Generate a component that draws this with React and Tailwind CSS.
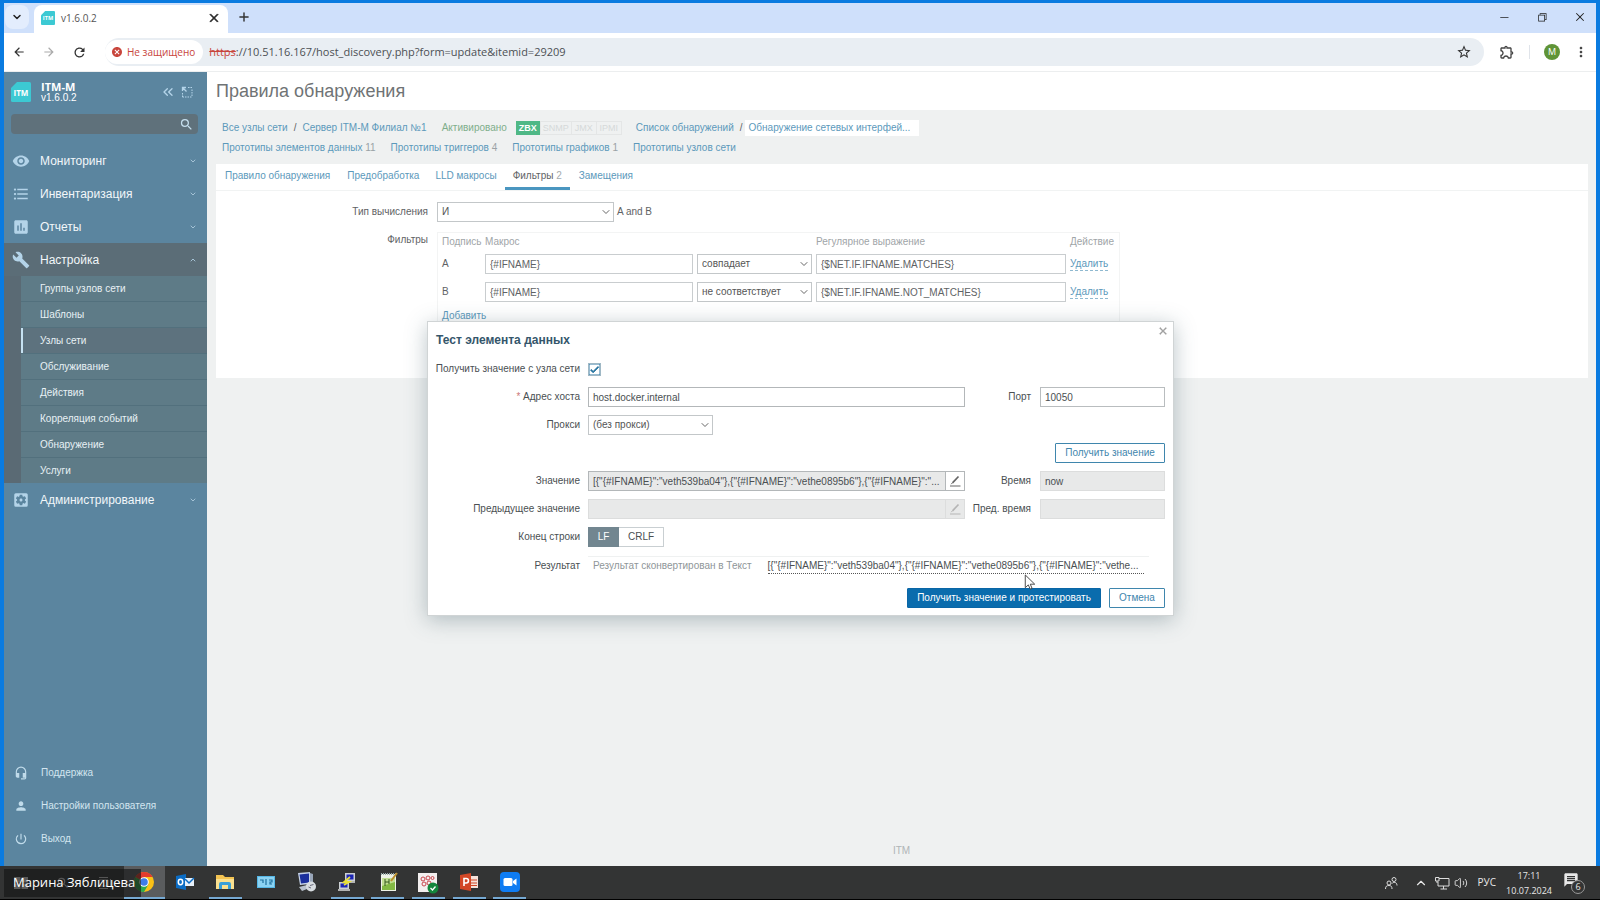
import React from "react";
import {
  MdArrowBack, MdArrowForward, MdRefresh, MdStarBorder, MdOutlineExtension, MdMoreVert,
  MdVisibility, MdFormatListBulleted, MdAssessment, MdBuild, MdSettingsApplications,
  MdHeadsetMic, MdPerson, MdPowerSettingsNew, MdSearch, MdCancel, MdCheck, MdMessage,
} from "react-icons/md";
import { VscChromeRestore, VscChromeClose, VscChromeMinimize } from "react-icons/vsc";
import { ChevronDown, ChevronUp, ChevronsLeft, Plus, Volume2 } from "lucide-react";

const VALUE = '[{"{#IFNAME}":"veth539ba04"},{"{#IFNAME}":"vethe0895b6"},{"{#IFNAME}":"...';
const RESULT = '[{"{#IFNAME}":"veth539ba04"},{"{#IFNAME}":"vethe0895b6"},{"{#IFNAME}":"vethe...';

function ItmLogo({ className }) {
  return (
    <svg viewBox="0 0 20 20" className={className} aria-hidden="true">
      <path d="M6 0H18.5A1.5 1.5 0 0 1 20 1.5V18.5A1.5 1.5 0 0 1 18.500 20H1.500A1.500 1.500 0 0 1 0 18.500V6Z" fill="#3cc9d3" />
      <text x="10" y="13.500" textAnchor="middle" fontSize="8" fontWeight="700" fontFamily="Open Sans, sans-serif" fill="#fff">ITM</text>
    </svg>
  );
}

function TabStrip() {
  return (
    <div className="flex h-[30px] shrink-0 items-end bg-[#cfe0fb]">
      <button aria-label="Поиск вкладок" className="mb-1 ml-px flex size-6 items-center justify-center rounded-lg bg-[#e3edfd]">
        <ChevronDown className="size-3 text-[#222]" strokeWidth={3} />
      </button>
      <div className="ml-[5px] flex h-7 w-[194px] items-center rounded-t-lg bg-white pr-2 pb-0.5 pl-[7px]">
        <ItmLogo className="size-[14px]" />
        <span className="ml-1.5 flex-1 text-[10px] text-[#555]">v1.6.0.2</span>
        <button aria-label="Закрыть вкладку" className="text-[#222]"><VscChromeClose className="size-3" strokeWidth={1} /></button>
      </div>
      <button aria-label="Новая вкладка" className="mb-[9px] ml-[9px]"><Plus className="size-3.5 text-[#333]" strokeWidth={2.5} /></button>
      <div className="mb-2.5 ml-auto flex items-center gap-[26px] pr-2.5 text-[#222]">
        <button aria-label="Свернуть"><VscChromeMinimize className="size-3" /></button>
        <button aria-label="Восстановить"><VscChromeRestore className="size-3" /></button>
        <button aria-label="Закрыть"><VscChromeClose className="size-3" /></button>
      </div>
    </div>
  );
}

function Toolbar() {
  return (
    <div className="flex h-[39px] shrink-0 items-center border-b border-[#eceeef] bg-white pl-2">
      <button aria-label="Назад"><MdArrowBack className="size-3.5 text-[#333]" /></button>
      <button aria-label="Вперёд" className="ml-4"><MdArrowForward className="size-3.5 text-[#aaa]" /></button>
      <button aria-label="Обновить" className="ml-4"><MdRefresh className="size-[15px] text-[#333]" /></button>
      <div className="ml-[18px] flex h-7 flex-1 items-center rounded-full bg-[#e9eef3] pr-3">
        <span className="flex h-6 items-center gap-1 rounded-full bg-white pr-2 pl-1.5 text-[10px] text-[#c8453c]">
          <MdCancel className="size-3" /> Не защищено
        </span>
        <span className="ml-1.5 flex-1 text-[11px] text-[#4c5054]">
          <span className="text-[#c8453c] line-through">https</span>://10.51.16.167/host_discovery.php?form=update&amp;itemid=29209
        </span>
        <button aria-label="Добавить в закладки"><MdStarBorder className="size-4 text-[#333]" /></button>
      </div>
      <div className="flex items-center pl-[15px]">
        <button aria-label="Расширения"><MdOutlineExtension className="size-4 text-[#444]" /></button>
        <span className="ml-[14px] h-3.5 w-px bg-[#e0e4ea]" />
        <button aria-label="Профиль" className="ml-[14px] flex size-4 items-center justify-center rounded-full bg-[#5f9437] text-[9px] text-white">M</button>
        <button aria-label="Меню" className="mr-[7px] ml-[13px]"><MdMoreVert className="size-4 text-[#444]" /></button>
      </div>
    </div>
  );
}

const SUB = ["Группы узлов сети", "Шаблоны", "Узлы сети", "Обслуживание", "Действия", "Корреляция событий", "Обнаружение", "Услуги"];

function NavItem({ icon: Icon, label, open }) {
  const Chev = open ? ChevronUp : ChevronDown;
  return (
    <a href="#" className={`flex h-[33px] items-center pr-2.5 pl-2 text-xs text-[#f2f7fa] ${open ? "bg-[#5b6d77]" : ""}`}>
      <Icon className="size-[18px] text-[#b4d4e9]" />
      <span className="ml-[10px] flex-1">{label}</span>
      <Chev className="size-2 text-[#a5c3d6]" strokeWidth={3} />
    </a>
  );
}

function Sidebar() {
  return (
    <aside className="flex w-[203px] shrink-0 flex-col bg-[#5b859f]">
      <div className="flex h-[42px] items-center pr-[14px] pb-0.5 pl-[7px]">
        <ItmLogo className="size-5" />
        <div className="ml-[10px] flex-1 text-white">
          <div className="font-['Open_Sans',sans-serif] text-[11px] leading-3 font-bold">ITM-M</div>
          <div className="text-[10px] leading-[10px]">v1.6.0.2</div>
        </div>
        <button aria-label="Свернуть меню"><ChevronsLeft className="size-4 text-[#b4d4e9]" /></button>
        <button aria-label="Скрыть меню" className="ml-[5px]">
          <svg viewBox="0 0 12 12" className="size-3" fill="none" stroke="#b4d4e9">
            <path d="M7 1.500H11M11 3.500V11M1.500 7V11M1.500 11H11" strokeDasharray="1.500 1" />
            <path d="M1.500 5V1.500H5M1.500 1.500L5.500 5.500" strokeWidth="1.300" />
          </svg>
        </button>
      </div>
      <div className="mr-[9px] ml-[7px] flex h-5 items-center rounded-sm bg-[#5f717b] pr-1">
        <input aria-label="Поиск" className="min-w-0 flex-1 bg-transparent px-1 text-[10px] text-white outline-none" />
        <button aria-label="Искать"><MdSearch className="size-[15px] text-[#c5dfee]" /></button>
      </div>
      <nav className="mt-[10px]">
        <NavItem icon={MdVisibility} label="Мониторинг" />
        <NavItem icon={MdFormatListBulleted} label="Инвентаризация" />
        <NavItem icon={MdAssessment} label="Отчеты" />
        <NavItem icon={MdBuild} label="Настройка" open />
        <ul className="border-l-[17px] border-[#5a6a74] bg-[#5e7b87]">
          {SUB.map((s) => (
            <li key={s} className="border-b border-[#52707d] last:border-b-0">
              <a href="#" className={`flex h-[25px] items-center border-l-2 pl-[17px] text-[10px] text-[#e8f1f5] ${s === "Узлы сети" ? "border-[#c6e2f2] bg-[#5d727e]" : "border-transparent"}`}>{s}</a>
            </li>
          ))}
        </ul>
        <NavItem icon={MdSettingsApplications} label="Администрирование" />
      </nav>
      <div className="mt-auto pb-[11px] text-[10px] text-[#d3e5ef]">
        {[[MdHeadsetMic, "Поддержка"], [MdPerson, "Настройки пользователя"], [MdPowerSettingsNew, "Выход"]].map(([Icon, t]) => (
          <a key={t} href="#" className="flex h-[33px] items-center pl-[10px]">
            <Icon className="size-3.5 text-[#c0dbea]" />
            <span className="ml-[13px]">{t}</span>
          </a>
        ))}
      </div>
    </aside>
  );
}

function Select({ id, label, options, className }) {
  return (
    <span className={`relative block ${className}`}>
      <select id={id} aria-label={label} className="h-5 w-full appearance-none border border-[#c3c7c9] bg-white pl-1 text-[10px] text-[#555]">
        {options.map((o) => <option key={o}>{o}</option>)}
      </select>
      <ChevronDown className="pointer-events-none absolute top-1 right-0.5 size-3 text-[#666]" />
    </span>
  );
}

const link = "text-[#5c99bb]";

function Page() {
  return (
    <div className="flex min-w-0 flex-1 flex-col bg-[#eff1f1] text-[10px] leading-4 text-[#5f6365]">
      <header className="flex h-[38px] items-center bg-white pl-[9px]"><h1 className="text-lg text-[#6f7375]">Правила обнаружения</h1></header>
      <div className="flex items-center pt-[10px] pl-[15px]">
        <a href="#" className={link}>Все узлы сети</a>
        <span className="mx-1.5">/</span>
        <a href="#" className={link}>Сервер ITM-M Филиал №1</a>
        <span className="ml-[15px] text-[#7fae8b]">Активировано</span>
        <span className="ml-[9px] flex h-[14px] items-center text-[9px] text-[#d5d9d9]">
          <span className="flex h-full w-6 items-center justify-center bg-[#4fb886] font-bold text-white">ZBX</span>
          <span className="flex h-full w-8 items-center justify-center border border-[#e4e6e6]">SNMP</span>
          <span className="flex h-full w-6 items-center justify-center border-y border-[#e4e6e6]">JMX</span>
          <span className="flex h-full w-[26px] items-center justify-center border border-[#e4e6e6]">IPMI</span>
        </span>
        <a href="#" className={`ml-[14px] ${link}`}>Список обнаружений</a>
        <span className="ml-1.5">/</span>
        <a href="#" className={`ml-0.5 bg-white pr-[9px] pl-1 ${link}`}>Обнаружение сетевых интерфей...</a>
      </div>
      <div className="mt-1 flex gap-[15px] pl-[15px] text-[#9aa2a6]">
        <span><a href="#" className={link}>Прототипы элементов данных</a> 11</span>
        <span><a href="#" className={link}>Прототипы триггеров</a> 4</span>
        <span><a href="#" className={link}>Прототипы графиков</a> 1</span>
        <a href="#" className={link}>Прототипы узлов сети</a>
      </div>
      <section className="mt-2 mr-2 ml-[9px] h-[214px] bg-white">
        <div className="flex h-[27px] border-b border-[#f1f3f3]">
          <a href="#" className={`px-[9px] pt-1 ${link}`}>Правило обнаружения</a>
          <a href="#" className={`px-2 pt-1 ${link}`}>Предобработка</a>
          <a href="#" className={`px-2 pt-1 ${link}`}>LLD макросы</a>
          <a href="#" className="border-b-3 border-[#4a96c0] px-2 pt-1">Фильтры <span className="text-[#a5abae]">2</span></a>
          <a href="#" className={`px-[9px] pt-1 ${link}`}>Замещения</a>
        </div>
        <div className="mt-[11px] flex items-center">
          <label htmlFor="evaltype" className="w-[212px] text-right">Тип вычисления</label>
          <Select id="evaltype" options={["И", "ИЛИ"]} className="ml-[9px] w-[177px]" />
          <span className="ml-[3px]">A and B</span>
        </div>
        <div className="mt-[10px] flex">
          <span className="w-[212px] text-right">Фильтры</span>
          <div className="ml-[9px] border border-[#f3f4f4]">
            <table className="w-[681px] table-fixed text-left">
              <thead>
                <tr className="h-[17px] text-[#9fa5a8]">
                  <th className="w-[47px] pl-1 font-normal">Подпись</th>
                  <th className="w-[212px] font-normal">Макрос</th>
                  <th className="w-[119px]" />
                  <th className="w-[254px] font-normal">Регулярное выражение</th>
                  <th className="font-normal">Действие</th>
                </tr>
              </thead>
              <tbody>
                {[["A", "совпадает", "{$NET.IF.IFNAME.MATCHES}"], ["B", "не соответствует", "{$NET.IF.IFNAME.NOT_MATCHES}"]].map(([l, op, re]) => (
                  <tr key={l} className="h-7">
                    <td className="pl-1">{l}</td>
                    <td className="pr-1"><input aria-label={`Макрос ${l}`} defaultValue="{#IFNAME}" className="block h-5 w-full border border-[#c9cdcf] pl-1" /></td>
                    <td className="pr-1"><Select label={`Оператор ${l}`} options={[op]} className="w-full" /></td>
                    <td className="pr-1"><input aria-label={`Выражение ${l}`} defaultValue={re} className="block h-5 w-full border border-[#c9cdcf] pl-1" /></td>
                    <td><button className="border-b border-dashed border-[#8fb9d0] leading-3 text-[#5c99bb]">Удалить</button></td>
                  </tr>
                ))}
              </tbody>
            </table>
            <button className="mt-1 ml-1 border-b border-dashed border-[#8fb9d0] leading-3 text-[#5c99bb]">Добавить</button>
          </div>
        </div>
      </section>
      <footer className="mt-auto pb-[7px] text-center text-[#b0b5b7]">ITM</footer>
    </div>
  );
}

function Row({ id, label, required, children, side }) {
  return (
    <div className="flex h-5 items-center">
      <label htmlFor={id} className="mr-2 w-[146px] shrink-0 text-right whitespace-nowrap">{required && <span className="text-[#c77]">* </span>}{label}</label>
      {children}
      {side}
    </div>
  );
}

function Side({ id, label, ...rest }) {
  return (
    <>
      <label htmlFor={id} className="ml-auto pr-[9px]">{label}</label>
      <input id={id} {...rest} className="h-5 w-[125px] border border-[#b9bdbf] pl-1 read-only:border-[#dcdddd] read-only:bg-[#e8e9e9]" />
    </>
  );
}

function Pencil({ className }) {
  return (
    <svg viewBox="0 0 12 12" className={`size-3 ${className}`} fill="none" stroke="currentColor">
      <path d="M3.500 7.800L9.500 1.500" strokeWidth="1.700" /><path d="M2.200 9.200L3.500 7.800" /><path d="M1 11H11.500" />
    </svg>
  );
}

function TestDialog() {
  const btn = "h-5 rounded-[1px] border border-[#3f86ad] text-[#3f86ad]";
  return (
    <div role="dialog" aria-labelledby="dlg-title" className="absolute top-[249px] left-[423px] w-[747px] border border-[#d0d4d5] bg-white pr-2 pb-[7px] pl-1.5 text-[10px] leading-4 text-[#4a4f52] shadow-[0_4px_20px_rgba(60,90,100,0.35)]">
      <div className="flex h-[37px] justify-between">
        <h2 id="dlg-title" className="pt-[10px] pl-0.5 text-xs leading-4 font-bold text-[#35566b]">Тест элемента данных</h2>
        <button aria-label="Закрыть" className="-mr-1 mt-[3px] flex size-3 items-center justify-center self-start text-[#999]"><VscChromeClose className="size-2.5" strokeWidth={1} /></button>
      </div>
      <div className="flex flex-col gap-2">
        <Row id="get" label="Получить значение с узла сети">
          <span className="relative block size-[13px]">
            <input id="get" type="checkbox" defaultChecked className="block size-[13px] appearance-none border border-[#9fb8c5] bg-white" />
            <MdCheck className="pointer-events-none absolute top-px left-px size-[11px] text-[#1f6f9c]" strokeWidth={2} />
          </span>
        </Row>
        <Row id="host" label="Адрес хоста" required side={<Side id="port" label="Порт" defaultValue="10050" />}>
          <input id="host" defaultValue="host.docker.internal" className="h-5 w-[377px] border border-[#b3b7b9] pl-1" />
        </Row>
        <Row id="proxy" label="Прокси"><Select id="proxy" options={["(без прокси)"]} className="w-[125px]" /></Row>
        <div className="flex justify-end"><button className={`${btn} w-[110px]`}>Получить значение</button></div>
        <Row id="val" label="Значение" side={<Side id="time" label="Время" defaultValue="now" readOnly />}>
          <input id="val" readOnly value={VALUE} className="h-5 w-[358px] border border-[#b3b7b9] bg-[#e8e9e9] pl-1" />
          <button aria-label="Изменить значение" className="flex h-5 w-[19px] items-center justify-center border border-l-0 border-[#b3b7b9]"><Pencil className="text-[#666]" /></button>
        </Row>
        <Row id="prev" label="Предыдущее значение" side={<Side id="ptime" label="Пред. время" defaultValue="" readOnly />}>
          <input id="prev" readOnly className="h-5 w-[358px] border border-[#dcdddd] bg-[#e8e9e9]" />
          <button disabled aria-label="Изменить предыдущее значение" className="flex h-5 w-[19px] items-center justify-center border border-l-0 border-[#dcdddd] bg-[#e8e9e9]"><Pencil className="text-[#b5b5b5]" /></button>
        </Row>
        <div className="flex h-5 items-center" role="group" aria-label="Конец строки">
          <span className="mr-2 w-[146px] text-right">Конец строки</span>
          <button className="h-5 w-[31px] border border-[#728690] bg-[#728690] text-white">LF</button>
          <button className="h-5 w-[45px] border border-l-0 border-[#c9cfd2]">CRLF</button>
        </div>
        <div className="flex h-[22px] items-center">
          <span className="mr-2 w-[146px] text-right">Результат</span>
          <div className="mr-4 flex flex-1 items-center border-t border-[#eff1f1] pt-px pb-0.5 pl-[5px]">
            <span className="mr-4 shrink-0 text-[#8f9699]">Результат сконвертирован в Текст</span>
            <a href="#" className="min-w-[376px] border-b border-dotted border-[#555] leading-[14px] whitespace-nowrap">{RESULT}</a>
          </div>
        </div>
      </div>
      <div className="mt-[11px] flex justify-end gap-2">
        <button className="h-5 w-[194px] rounded-[1px] border border-[#0a66a6] bg-[#0a6cad] text-white">Получить значение и протестировать</button>
        <button className={`${btn} w-14`}>Отмена</button>
      </div>
    </div>
  );
}

const ICONS = [
  <svg viewBox="0 0 20 20" className="size-5"><circle cx="10" cy="10" r="10" fill="#fbc116" /><path d="M10 10L1.340 5A10 10 0 0 1 18.660 5H10Z" fill="#e33b2e" /><path d="M1.340 5A10 10 0 0 0 10 20L14.300 12.500L10 10L5.700 12.500Z" fill="#2da94f" /><path d="M1.340 5L5.700 12.500L10 10Z" fill="#2da94f" /><circle cx="10" cy="10" r="4.800" fill="#fff" /><circle cx="10" cy="10" r="3.800" fill="#3f7de8" /></svg>,
  <svg viewBox="0 0 20 20" className="size-5"><path d="M1 4L11 2V18L1 16Z" fill="#0b6cc4" /><rect x="10" y="6" width="9" height="8" fill="#e8f1fa" /><path d="M10 7L14 11L19 6" stroke="#0b6cc4" fill="none" strokeWidth="1.500" /><ellipse cx="5.500" cy="10" rx="2.200" ry="2.700" fill="none" stroke="#fff" strokeWidth="1.500" /></svg>,
  <svg viewBox="0 0 20 20" className="size-5"><path d="M1 3H8L10 5H19V17H1Z" fill="#f3c352" /><path d="M1 7H19V17H1Z" fill="#fbe08f" /><path d="M4 17V12Q4 10 6 10H14Q16 10 16 12V17H13V13H7V17Z" fill="#3a9fd8" /></svg>,
  <svg viewBox="0 0 20 20" className="size-5"><rect x="1" y="4" width="18" height="12" fill="#55b7e6" /><rect x="2" y="5" width="16" height="10" fill="#8bd2f2" /><path d="M4 8H7V11M10 7V13M13 8H16V10H14V12H16" stroke="#1e6f9c" fill="none" strokeWidth="1.200" /></svg>,
  <svg viewBox="0 0 20 20" className="size-5"><path d="M1 1L13 0V12L3 13Z" fill="#c7d3e8" /><path d="M2.500 2.500L12 1.500V10.500L4 11.500Z" fill="#1b2f9d" /><path d="M13 1L16 2V11L13 12Z" fill="#98a5b8" /><path d="M2 15L10 13V17L5 19Z" fill="#b9c2ce" /><circle cx="14" cy="14.500" r="5" fill="#d7dce0" /><path d="M11.500 15L14 16M13 13.500L16.500 12.500" stroke="#667" fill="none" /></svg>,
  <svg viewBox="0 0 20 20" className="size-5"><rect x="8" y="1" width="10" height="8" fill="#ccd0d4" /><rect x="9.500" y="2.500" width="7" height="5" fill="#1c25b5" /><rect x="2" y="10" width="10" height="7" fill="#ccd0d4" /><rect x="3.500" y="11.500" width="7" height="4" fill="#1c25b5" /><path d="M1 18H13M11 10H18" stroke="#ddd" strokeWidth="1.500" /><path d="M13 5L7 10H12L7 13" stroke="#e9e034" strokeWidth="1.800" fill="none" /></svg>,
  <svg viewBox="0 0 20 20" className="size-5"><rect x="3" y="2" width="15" height="17" fill="#eef2e8" /><path d="M4 6H17V18H4Z" fill="#83b944" /><path d="M4 6H17V10L4 14Z" fill="#c2df93" /><path d="M3 2H18" stroke="#9aa" strokeDasharray="1 1" strokeWidth="2" /><path d="M7 7V14M7 10H11M11 7V12" stroke="#345a1d" /><path d="M13 9L19 1" stroke="#b98d2d" strokeWidth="2" /></svg>,
  <svg viewBox="0 0 22 22" className="size-[22px]"><rect x="1" y="1" width="19" height="19" fill="#f3efef" /><g fill="none" stroke="#c9454c"><circle cx="6" cy="7" r="2" /><circle cx="11" cy="6" r="2" /><circle cx="15.500" cy="6" r="1.500" /><circle cx="7" cy="12" r="2" /><circle cx="12" cy="11" r="2" /></g><circle cx="16" cy="16" r="5.500" fill="#14863c" /><path d="M13.500 16L15.500 18L18.500 14.500" stroke="#fff" fill="none" strokeWidth="1.300" /></svg>,
  <svg viewBox="0 0 20 20" className="size-5"><rect x="9" y="4" width="10" height="12" fill="#f6e2da" /><path d="M12 8H18M12 11H18M12 13.500H18" stroke="#d24726" /><path d="M1 3L12 1V19L1 17Z" fill="#d24726" /><path d="M5 14V6.500H7.200A2.200 2.200 0 0 1 7.200 11H5" fill="none" stroke="#fff" strokeWidth="1.600" /></svg>,
  <svg viewBox="0 0 20 20" className="size-5"><rect width="20" height="20" rx="4" fill="#0f7cf2" /><rect x="3.500" y="6" width="9" height="8" rx="1.500" fill="#fff" /><path d="M13 9L16.500 6.500V13.500L13 11Z" fill="#fff" /></svg>,
];
const NAMES = ["Chrome", "Outlook", "Проводник", "Панель управления", "Удалённый рабочий стол", "PuTTY", "Notepad++", "База данных", "PowerPoint", "Zoom"];
const RUNNING = [0, 2, 5, 6, 7, 8, 9];

function Taskbar() {
  return (
    <div className="relative flex h-[34px] shrink-0 items-stretch border-b border-black bg-[#333434] font-['Open_Sans','Noto_Sans',sans-serif] text-[#e8e8e8]">
      <div className="flex w-[124px] items-center gap-7 pl-3.5 text-[#ccc]">
        <svg viewBox="0 0 14 14" className="size-3.5" fill="#ddd"><path d="M0 1H6.500V6.500H0ZM7.500 1H14V6.500H7.500ZM0 7.500H6.500V13H0ZM7.500 7.500H14V13H7.500Z" /></svg>
        <MdSearch className="size-3.5" />
        <svg viewBox="0 0 14 14" className="size-3.5" fill="none" stroke="#ccc"><path d="M1 4H10V10H1ZM12.500 3V11M1 1.500H10M1 12.500H10" /></svg>
      </div>
      <div className="flex w-[406px]">
        {ICONS.map((ic, i) => (
          <button key={i} aria-label={NAMES[i]} className={`flex flex-1 flex-col items-center justify-between pt-1.5 ${i === 0 ? "bg-[#5a5c5e]" : ""}`}>
            {ic}
            <span className={`h-0.5 ${i === 0 ? "w-full" : "w-[33px]"} ${RUNNING.includes(i) ? "bg-[#76a9d3]" : ""}`} />
          </button>
        ))}
      </div>
      <div className="absolute top-[3px] left-1 flex h-7 w-[137px] items-center bg-[#161616]/65 pl-[9px] text-[13px] whitespace-nowrap text-white">Марина Зяблицева</div>
      <div className="ml-auto flex items-center text-[11px]">
        <svg viewBox="0 0 14 14" className="size-3.5" fill="none" stroke="#ddd"><circle cx="10" cy="3.500" r="2" /><circle cx="5" cy="7" r="2" /><path d="M1.500 13C1.500 10 3 9.500 5 9.500S8 10.500 8 13M8 7.500C9 6 13 5.500 13 9.500" /></svg>
        <ChevronUp className="ml-4 size-3.5" />
        <svg viewBox="0 0 16 14" className="ml-1.5 h-3.5 w-4" fill="none" stroke="#ddd"><path d="M5 2.500H15V10H4V6M1.500 1.500H5V5H1.500ZM9.500 10V13M6.500 13H13M3 5V7" /></svg>
        <Volume2 className="ml-1 size-3.5" strokeWidth={1.500} />
        <span className="ml-2.5 text-[10px]">РУС</span>
        <span className="ml-2.5 text-center text-[9px] leading-[15px]">17:11<br />10.07.2024</span>
        <span className="relative mr-[15px] ml-[11px] block size-[22px]">
          <MdMessage className="size-4" />
          <span className="absolute right-0 bottom-0 flex size-3.5 items-center justify-center rounded-full border border-[#999] bg-[#333434] text-[9px]">6</span>
        </span>
      </div>
    </div>
  );
}

export default function App() {
  return (
    <div className="flex h-screen flex-col overflow-hidden bg-[#0a7be0] font-['Liberation_Sans',Arial,sans-serif]">
      <div className="mx-1 mt-[3px] flex min-h-0 flex-1 flex-col">
        <div className="font-['Open_Sans','Noto_Sans',sans-serif]"><TabStrip /><Toolbar /></div>
        <div className="relative flex min-h-0 flex-1">
          <Sidebar />
          <Page />
          <TestDialog />
          <svg viewBox="0 0 12 18" className="pointer-events-none absolute top-[502px] left-[1020px] h-[17px] w-3" aria-hidden="true">
            <path d="M1 1V14.500L4.200 11.500L6.200 16L8.200 15.200L6.300 10.800H11Z" fill="#fff" stroke="#444" />
          </svg>
        </div>
      </div>
      <Taskbar />
    </div>
  );
}
